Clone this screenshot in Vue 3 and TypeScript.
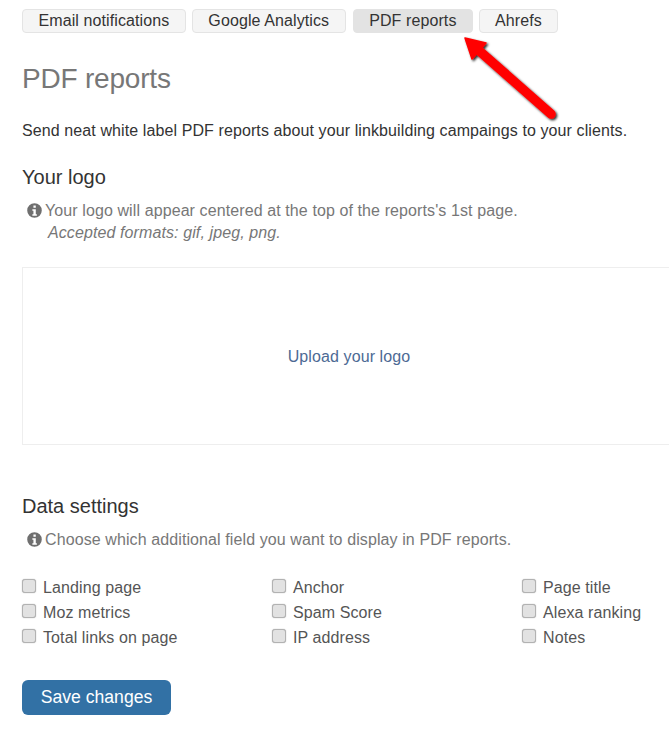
<template>
  <div class="page">
    <div class="tabs">
      <button
        v-for="tab in tabs"
        :key="tab"
        class="tab"
        :class="{ active: tab === activeTab }"
      >
        {{ tab }}
      </button>
    </div>

    <svg class="arrow" width="115" height="100" viewBox="0 0 115 100">
      <defs>
        <filter id="arrow-shadow" x="-20%" y="-20%" width="140%" height="140%">
          <feDropShadow dx="1.5" dy="1.5" stdDeviation="1.3" flood-color="#000" flood-opacity="0.85" />
        </filter>
      </defs>
      <g filter="url(#arrow-shadow)">
        <path d="M96 84 L21 18" stroke="#f00" stroke-width="9.500" stroke-linecap="round" />
        <path d="M10 8 L31 13 L17 29 Z" fill="#f00" stroke="#f00" stroke-width="1.500" stroke-linejoin="round" />
      </g>
    </svg>

    <h1 class="title">PDF reports</h1>
    <p class="intro">
      Send neat white label PDF reports about your linkbuilding campaings to your clients.
    </p>

    <h2 class="section first">Your logo</h2>
    <div class="hint">
      <svg class="info" viewBox="0 0 14 14" width="14" height="14">
        <path
          fill-rule="evenodd"
          d="M7 .2a6.800 6.800 0 1 0 0 13.600A6.800 6.800 0 0 0 7 .2ZM6 2.400h2.200v2H6v-2ZM5 5.800h3.200v4.600h1v1.400H5v-1.400h1V7.200H5V5.800Z"
        />
      </svg>
      <div>
        Your logo will appear centered at the top of the reports's 1st page.<br />
        <em class="formats">Accepted formats: gif, jpeg, png.</em>
      </div>
    </div>

    <div class="upload">Upload your logo</div>

    <h2 class="section second">Data settings</h2>
    <div class="hint">
      <svg class="info" viewBox="0 0 14 14" width="14" height="14">
        <path
          fill-rule="evenodd"
          d="M7 .2a6.800 6.800 0 1 0 0 13.600A6.800 6.800 0 0 0 7 .2ZM6 2.400h2.200v2H6v-2ZM5 5.800h3.200v4.600h1v1.400H5v-1.400h1V7.200H5V5.800Z"
        />
      </svg>
      <div>Choose which additional field you want to display in PDF reports.</div>
    </div>

    <div class="fields">
      <label v-for="field in fields" :key="field" class="field">
        <span class="box"></span>
        {{ field }}
      </label>
    </div>

    <button class="save">Save changes</button>
  </div>
</template>

<script setup lang="ts">
const tabs: string[] = ["Email notifications", "Google Analytics", "PDF reports", "Ahrefs"];
const activeTab = "PDF reports";

const fields: string[] = [
  "Landing page",
  "Anchor",
  "Page title",
  "Moz metrics",
  "Spam Score",
  "Alexa ranking",
  "Total links on page",
  "IP address",
  "Notes",
];
</script>

<style>
html,
body {
  margin: 0;
  background: #fff;
}
</style>

<style scoped>
.page {
  position: relative;
  width: 669px;
  height: 741px;
  padding: 9px 0 0 22px;
  box-sizing: border-box;
  overflow: hidden;
  font-family: "Liberation Sans", Arial, sans-serif;
  font-size: 16px;
  letter-spacing: 0.1px;
  color: #333;
}
.tabs {
  display: flex;
  gap: 6px;
}
.tab {
  height: 24px;
  padding: 0 15.500px;
  border: 1px solid #e4e4e4;
  border-radius: 4px;
  background: #f5f5f5;
  font: inherit;
  letter-spacing: inherit;
  color: #333;
}
.tab.active {
  background: #e3e3e3;
  border-color: #e3e3e3;
}
.tab:nth-child(3) {
  margin-left: 1px;
}
.tab:last-child {
  padding: 0 15px;
}
.arrow {
  position: absolute;
  left: 455px;
  top: 30px;
}
.title {
  margin: 29px 0 0;
  font-size: 28px;
  font-weight: 400;
  line-height: 34px;
  letter-spacing: -0.2px;
  color: #777;
}
.intro {
  margin: 24px 0 0;
  line-height: 22px;
}
.section {
  margin: 0;
  font-size: 20px;
  font-weight: 400;
  line-height: 24px;
  letter-spacing: 0;
  color: #333;
}
.section.first {
  margin-top: 23px;
}
.section.second {
  margin-top: 49px;
}
.hint {
  display: flex;
  gap: 3px;
  margin: 11px 0 0 5px;
  line-height: 22px;
  color: #777;
}
.info {
  flex: none;
  width: 15px;
  height: 15px;
  margin-top: 3px;
  fill: #6f6f6f;
}
.formats {
  margin-left: 3px;
}
.upload {
  display: flex;
  align-items: center;
  justify-content: center;
  width: 652px;
  height: 178px;
  margin-top: 23px;
  padding: 2px 0 0 2px;
  box-sizing: border-box;
  border: 1px solid #eee;
  color: #4d6a94;
}
.fields {
  display: grid;
  grid-template-columns: repeat(3, 250px);
  grid-auto-rows: 25px;
  margin-top: 24px;
}
.field {
  display: flex;
  align-items: center;
  gap: 7px;
  color: #555;
}
.box {
  width: 14px;
  height: 14px;
  box-sizing: border-box;
  border: 1px solid #b2b2b2;
  border-radius: 3px;
  background: #e2e2e2;
  box-shadow: 0 0 1px #999;
  margin-top: -3px;
}
.save {
  display: block;
  width: 149px;
  height: 35px;
  margin-top: 30px;
  border: 0;
  border-radius: 6px;
  background: #3271a5;
  color: #fff;
  font: inherit;
  font-size: 17.600px;
  letter-spacing: 0;
}
</style>
